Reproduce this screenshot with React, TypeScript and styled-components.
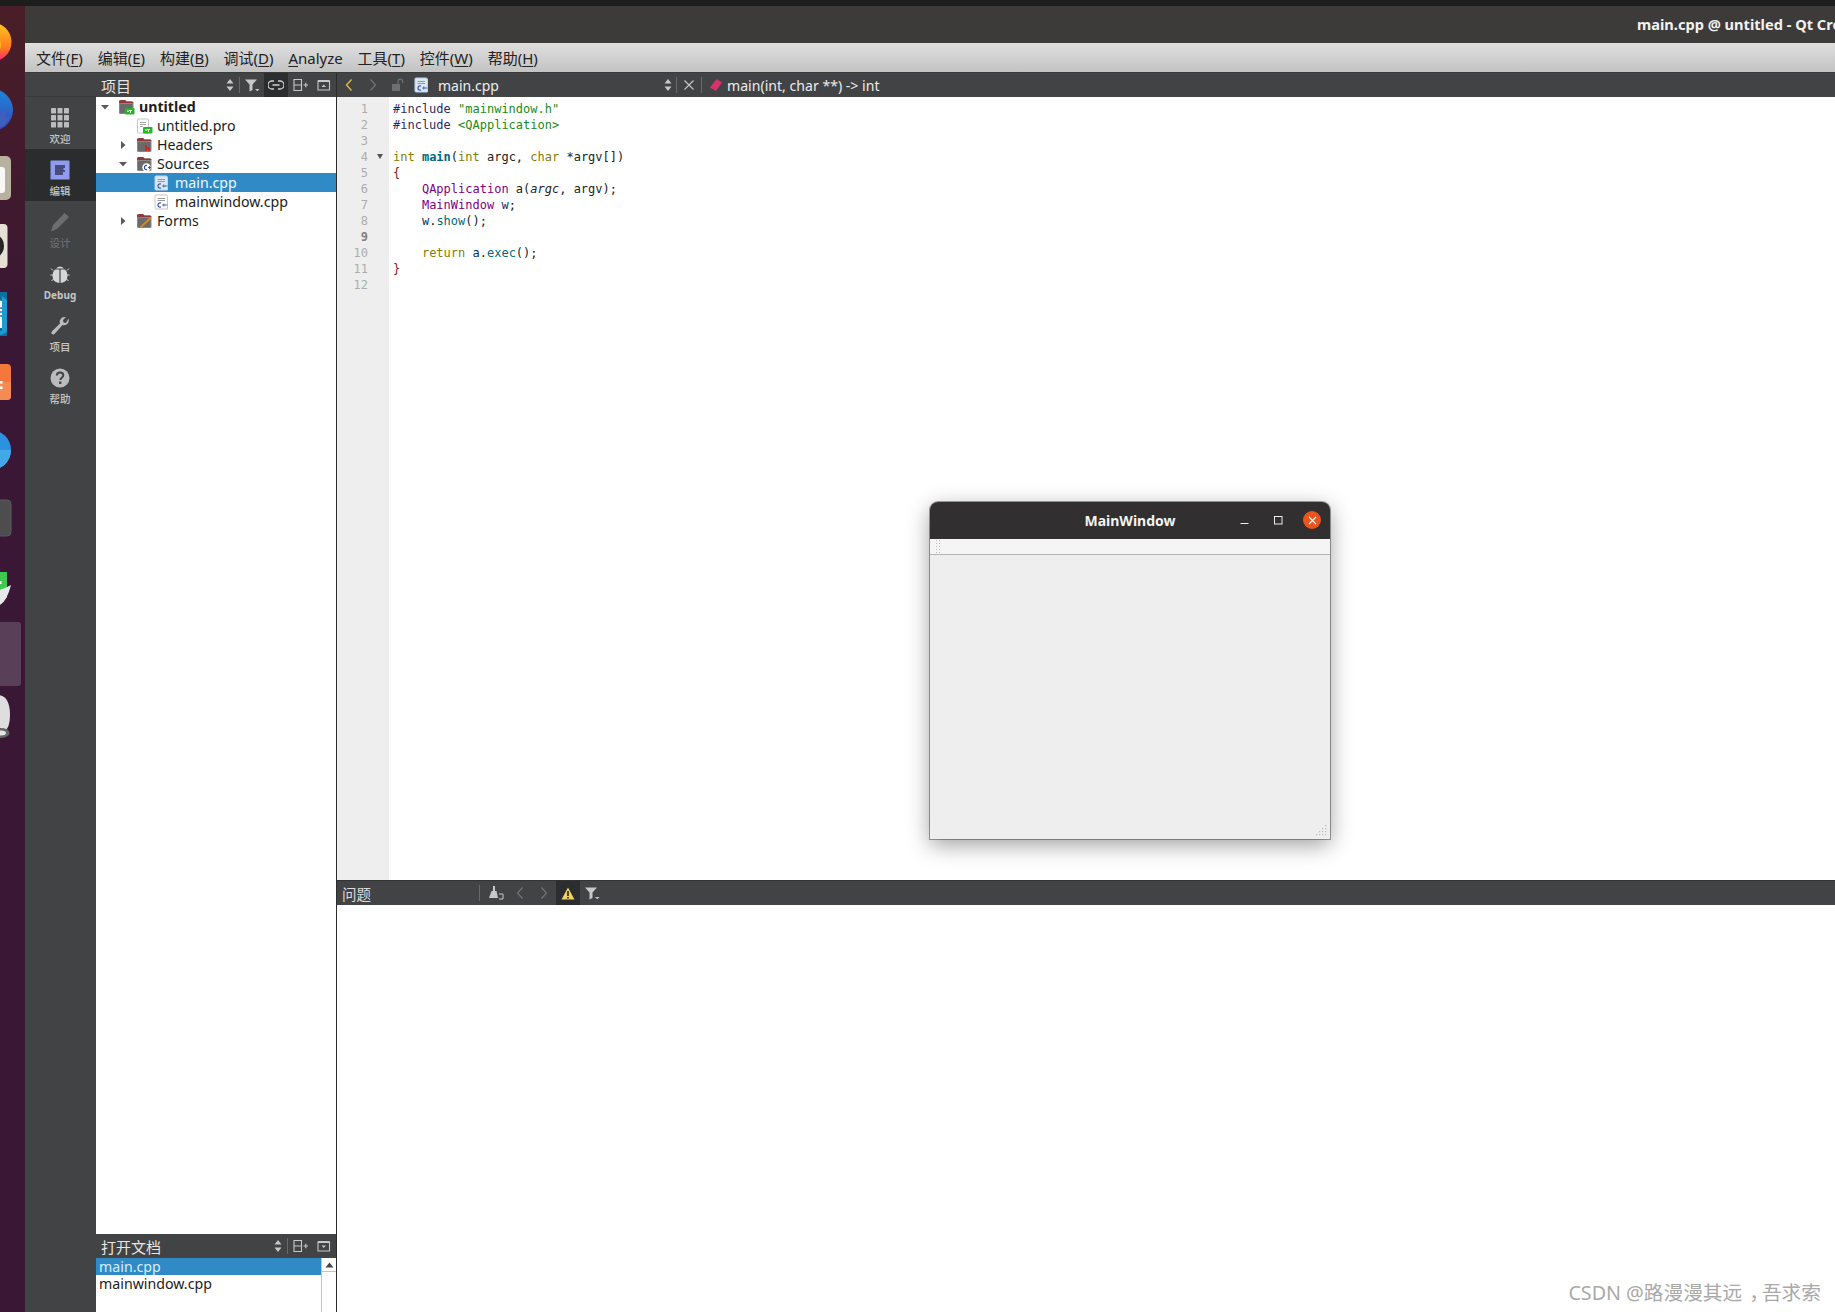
import React from 'react';
import styled, { createGlobalStyle } from 'styled-components';

const ui = `"Noto Sans", "Noto Sans CJK SC", sans-serif`;
const mono = `"DejaVu Sans Mono", monospace`;

const Global = createGlobalStyle`
  html, body { margin: 0; padding: 0; background: #fff; overflow: hidden; }
  body { font-family: ${ui}; }
  svg { flex: none; }
`;

/* ---- window chrome ---- */
const Screen = styled.div`
  position: relative;
  width: 1835px;
  height: 1312px;
  display: flex;
  overflow: hidden;
`;
const Dock = styled.div`
  width: 25px;
  flex: none;
  background: linear-gradient(#4a1e27, #3a1734 320px);
  display: flex;
  flex-direction: column;
  padding-top: 2px;
`;
const DockSlot = styled.div`
  height: 68px;
  flex: none;
  display: flex;
`;
const Desktop = styled.div`
  flex: 1;
  min-width: 0;
  display: flex;
  flex-direction: column;
`;
const TopStrip = styled.div`
  position: absolute;
  left: 0; right: 0; top: 0;
  height: 6px;
  background: #1d1d1d;
`;
const TitleBar = styled.div`
  height: 43px;
  flex: none;
  padding: 4px 0 0 1612px;
  box-sizing: border-box;
  background: #3d3b39;
  display: flex;
  align-items: center;
  overflow: hidden;
`;
const TitleText = styled.div`
  color: #f2f2f2;
  font-size: 14.6px;
  font-weight: 700;
  white-space: nowrap;
`;
const MenuBar = styled.div`
  height: 30px;
  flex: none;
  box-sizing: border-box;
  background: linear-gradient(#dfdfdf, #c3c3c3);
  border-bottom: 1px solid #3a3a3a;
  display: flex;
  align-items: center;
  padding-left: 11px;
  gap: 14.85px;
`;
const MenuItem = styled.span`
  font-size: 15px;
  line-height: 22px;
  margin-top: 1px;
  color: #222;
  white-space: nowrap;
  u { text-underline-offset: 2px; }
`;
const Work = styled.div`
  flex: 1;
  min-height: 0;
  display: flex;
`;

/* ---- mode bar ---- */
const ModeBar = styled.div`
  width: 71px;
  flex: none;
  background: #424345;
  display: flex;
  flex-direction: column;
`;
const ModeCap = styled.div`
  height: 24px;
  border-bottom: 1px solid #38393a;
  box-sizing: border-box;
`;
const ModeItem = styled.div<{ $active?: boolean; $dim?: boolean }>`
  height: 52px;
  flex: none;
  display: flex;
  flex-direction: column;
  align-items: center;
  justify-content: flex-start;
  padding: 11px 1px 0 0;
  box-sizing: border-box;
  background: ${(p) => (p.$active ? '#2b2c2e' : 'transparent')};
  color: ${(p) => (p.$dim ? '#6c6d6e' : '#c6c6c6')};
`;
const ModeLabel = styled.span<{ $latin?: boolean }>`
  font-size: ${(p) => (p.$latin ? '10px' : '10.5px')};
  font-weight: ${(p) => (p.$latin ? 700 : 500)};
  line-height: 13px;
  margin-top: 5px;
`;

/* ---- side panel ---- */
const Side = styled.div`
  width: 241px;
  flex: none;
  display: flex;
  flex-direction: column;
  border-right: 1px solid #2b2b2b;
  box-sizing: border-box;
`;
const PanelHead = styled.div`
  height: 24px;
  flex: none;
  background: #424345;
  display: flex;
  align-items: center;
  color: #e6e6e6;
  font-size: 15px;
  box-sizing: border-box;
`;
const HeadTitle = styled.span`
  padding-left: 5px;
  flex: 1;
  white-space: nowrap;
`;
const ToolBtn = styled.div<{ $on?: boolean; $narrow?: boolean }>`
  width: ${(p) => (p.$narrow ? 18 : 24)}px;
  height: 24px;
  flex: none;
  display: flex;
  align-items: center;
  justify-content: center;
  background: ${(p) => (p.$on ? '#2c2d2e' : 'transparent')};
`;
const Sep = styled.div<{ $after?: number }>`
  width: 1px;
  height: 16px;
  background: #68696b;
  flex: none;
  margin-right: ${(p) => p.$after ?? 0}px;
`;
const Tree = styled.div`
  flex: 1;
  background: #fff;
  min-height: 0;
`;
const Row = styled.div<{ $depth: number; $sel?: boolean }>`
  height: 19px;
  display: flex;
  align-items: center;
  padding-left: ${(p) => 2 + p.$depth * 18}px;
  background: ${(p) => (p.$sel ? '#2f8ac6' : 'transparent')};
  color: ${(p) => (p.$sel ? '#f2f7fb' : '#1c1c1c')};
  font-size: 14.2px;
  white-space: nowrap;
`;
const Arrow = styled.span`
  width: 14px;
  height: 14px;
  flex: none;
  display: flex;
  align-items: center;
  justify-content: center;
  margin-right: 6px;
`;
const RowIcon = styled.span`
  width: 16px;
  height: 16px;
  flex: none;
  display: flex;
  margin-right: 5px;
`;
const RowName = styled.span<{ $bold?: boolean }>`
  font-weight: ${(p) => (p.$bold ? 700 : 400)};
`;
const OpenDocs = styled.div`
  height: 54px;
  flex: none;
  display: flex;
  background: #fff;
  overflow: hidden;
`;
const DocList = styled.div`
  flex: 1;
  min-width: 0;
`;
const DocRow = styled.div<{ $sel?: boolean }>`
  height: 17px;
  line-height: 17px;
  padding-left: 3px;
  font-size: 14.2px;
  background: ${(p) => (p.$sel ? '#2f8ac6' : 'transparent')};
  color: ${(p) => (p.$sel ? '#d9ecf8' : '#1c1c1c')};
`;
const ScrollTrack = styled.div`
  width: 14px;
  flex: none;
  border-left: 1px solid #c4c4c4;
  display: flex;
  flex-direction: column;
`;
const ScrollUp = styled.div`
  height: 13px;
  border-bottom: 1px solid #c4c4c4;
  display: flex;
  align-items: center;
  justify-content: center;
`;

/* ---- editor ---- */
const Main = styled.div`
  flex: 1;
  min-width: 0;
  display: flex;
  flex-direction: column;
`;
const EditorBar = styled.div`
  height: 24px;
  flex: none;
  background: #424345;
  display: flex;
  align-items: center;
  color: #ececec;
  font-size: 14px;
`;
const FileCombo = styled.div`
  width: 267px;
  flex: none;
  display: flex;
  align-items: center;
  gap: 9px;
  padding: 0 3px 0 5px;
  box-sizing: border-box;
`;
const ComboName = styled.span`
  flex: 1;
`;
const SymbolMark = styled.svg`
  margin-left: 7px;
`;
const SymbolName = styled.span`
  margin-left: 4px;
  font-size: 14.1px;
  white-space: nowrap;
`;
const EditorBody = styled.div`
  height: 783px;
  flex: none;
  display: flex;
  background: #fff;
`;
const Gutter = styled.div`
  width: 52px;
  flex: none;
  background: #eeeeee;
  padding-top: 4px;
  box-sizing: border-box;
`;
const LineNo = styled.div<{ $cur?: boolean }>`
  height: 16px;
  line-height: 16px;
  width: 31px;
  text-align: right;
  font-family: ${mono};
  font-size: 12px;
  font-weight: ${(p) => (p.$cur ? 700 : 400)};
  color: ${(p) => (p.$cur ? '#808080' : '#adadad')};
  position: relative;
`;
const Fold = styled.span`
  position: absolute;
  left: 40px;
  top: 5px;
  width: 0;
  height: 0;
  border-left: 3.5px solid transparent;
  border-right: 3.5px solid transparent;
  border-top: 5px solid #555;
`;
const Code = styled.div`
  padding: 4px 0 0 4px;
  font-family: ${mono};
  font-size: 12px;
  color: #222;
`;
const CodeLine = styled.div`
  height: 16px;
  line-height: 16px;
  white-space: pre;
`;
const Tok = styled.span<{ $c: string; $b?: boolean; $i?: boolean }>`
  color: ${(p) => p.$c};
  font-weight: ${(p) => (p.$b ? 700 : 400)};
  font-style: ${(p) => (p.$i ? 'italic' : 'normal')};
`;
const ProblemsBar = styled.div`
  height: 25px;
  flex: none;
  background: #424345;
  border-top: 1px solid #333;
  box-sizing: border-box;
  display: flex;
  align-items: center;
  color: #dcdcdc;
  font-size: 14.5px;
`;
const ProblemsTitle = styled.span`
  width: 142px;
  padding-left: 5px;
  box-sizing: border-box;
  flex: none;
`;
const ProblemsBody = styled.div`
  flex: 1;
  background: #fff;
`;

/* ---- floating app window ---- */
const AppWindow = styled.div`
  position: absolute;
  left: 930px;
  top: 502px;
  width: 400px;
  height: 337px;
  border-radius: 8px 8px 0 0;
  box-shadow: 0 6px 22px rgba(0, 0, 0, 0.38), 0 0 0 1px rgba(0, 0, 0, 0.35);
  display: flex;
  flex-direction: column;
  background: #eeeeee;
`;
const WinHead = styled.div`
  height: 37px;
  flex: none;
  background: #312f2f;
  border-radius: 8px 8px 0 0;
  position: relative;
  display: flex;
  align-items: center;
  justify-content: center;
  color: #f3f3f3;
  font-size: 14px;
  font-weight: 700;
`;
const WinCtrls = styled.div`
  position: absolute;
  right: 9px;
  top: 9px;
  display: flex;
  align-items: center;
  gap: 16px;
`;
const WinBtn = styled.div<{ $close?: boolean }>`
  width: 18px;
  height: 18px;
  border-radius: 50%;
  background: ${(p) => (p.$close ? '#e95420' : 'transparent')};
  display: flex;
  align-items: center;
  justify-content: center;
`;
const WinTools = styled.div`
  height: 16px;
  flex: none;
  background: #f5f5f5;
  border-bottom: 1px solid #b4b4b4;
  padding-left: 5px;
  box-sizing: border-box;
`;
const Grip = styled.div`
  width: 5px;
  height: 15px;
  background-image: radial-gradient(circle, #bbb 0.8px, transparent 1px);
  background-size: 3px 3px;
`;
const WinBody = styled.div`
  flex: 1;
  position: relative;
`;
const SizeGrip = styled.svg`
  position: absolute;
  right: 2px;
  bottom: 2px;
`;
const Watermark = styled.div`
  position: absolute;
  right: 14px;
  bottom: 6px;
  color: #a9a9a9;
  font-size: 19.7px;
  white-space: nowrap;
`;
const WatermarkComma = styled.span`
  margin: 0 -7px 0 7px;
`;

/* ---- small drawings ---- */
const Chevron = ({ dir, color }: { dir: 'l' | 'r'; color: string }) => (
  <svg width="12" height="14" viewBox="0 0 12 14">
    <path d={dir === 'l' ? 'M8.500 1.500 3.500 7l5 5.500' : 'M3.500 1.500 8.500 7l-5 5.500'} fill="none" stroke={color} strokeWidth="1.400" />
  </svg>
);
const Updown = () => (
  <svg width="10" height="14" viewBox="0 0 10 14">
    <path d="M5 1 8.500 5.500h-7zM5 13 1.500 8.500h7z" fill="#c8c8c8" />
  </svg>
);
const FilterIco = ({ color = '#c8c8c8' }: { color?: string }) => (
  <svg width="16" height="14" viewBox="0 0 16 14">
    <path d="M1 1.500h12L8.500 6.500v5.500L5.500 13.500V6.500z" fill={color} />
    <path d="M11 11h4.500l-2.250 2.200z" fill={color} />
  </svg>
);
const SplitIco = () => (
  <svg width="16" height="14" viewBox="0 0 16 14">
    <path d="M2 1.500h7.500v11H2zM2 7h7.500" fill="none" stroke="#c8c8c8" strokeWidth="1.100" />
    <path d="M11.500 7h4.500M13.750 4.800v4.400" stroke="#c8c8c8" strokeWidth="1.100" />
  </svg>
);
const PanelIco = ({ down }: { down?: boolean }) => (
  <svg width="14" height="12" viewBox="0 0 14 12">
    <path d="M1 2h11.500v9H1z" fill="none" stroke="#c8c8c8" strokeWidth="1.100" />
    <path d="M1 1h11.500v2H1z" fill="#c8c8c8" />
    <path d={down ? 'M4.500 5.500h4.500L6.800 8z' : 'M4.500 8h4.500L6.800 5.500z'} fill="#c8c8c8" />
  </svg>
);
const TreeArrow = ({ open }: { open?: boolean }) => (
  <svg width="10" height="10" viewBox="0 0 10 10">
    <path d={open ? 'M1 3h8L5 7.500z' : 'M3 1l4.500 4L3 9z'} fill="#5a5a5a" />
  </svg>
);
const Folder = ({ badge }: { badge: 'qt' | 'h' | 'cpp' | 'form' }) => (
  <svg width="17" height="16" viewBox="0 0 17 16">
    <path d="M1 3Q1 1 3 1h4L8.500 2.500H14q1.500 0 1.500 1.500v9.500q0 1.500-1.500 1.500H2.500Q1 15 1 13.500z" fill="#8b8684" />
    <path d="M1 3Q1 1 3 1h4L8.500 2.500H14q1.500 0 1.500 1.500H1z" fill="#8c3a3a" />
    <rect x="2" y="5" width="12.500" height="9" rx="1" fill="#6b6a6a" />
    {badge === 'qt' && (
      <>
        <rect x="7" y="9" width="9.500" height="6.500" rx="1" fill="#26b526" />
        <path d="M9 12h2M12.500 11v3M14 11.500h-3" stroke="#fff" strokeWidth="1" fill="none" />
      </>
    )}
    {badge === 'h' && <path d="M10 8v6M10 11.500q3-1.500 3 .5v2" fill="none" stroke="#e01a1a" strokeWidth="1.500" />}
    {badge === 'cpp' && (
      <>
        <circle cx="10.500" cy="11.500" r="4.200" fill="#fff" />
        <path d="M11 9.500q-2.500-.5-2.500 2t2.500 2" fill="none" stroke="#2d4fa8" strokeWidth="1.200" />
        <path d="M12 11.500h3M13.500 10v3" stroke="#2d4fa8" strokeWidth="0.900" />
      </>
    )}
    {badge === 'form' && <path d="M4.500 14.500 14.500 5" stroke="#d9842b" strokeWidth="1.800" />}
  </svg>
);
const FileQt = () => (
  <svg width="17" height="16" viewBox="0 0 17 16">
    <path d="M2.500 1h9q1 0 1 1v13h-10q-1 0-1-1V2q0-1 1-1z" fill="#fff" stroke="#c6c6c6" />
    <path d="M4 4.500h6M4 6.500h6M4 8.500h3" stroke="#9c9c9c" strokeWidth="0.900" />
    <rect x="7" y="9" width="9.500" height="6.500" rx="1" fill="#26b526" />
    <path d="M9 12h2M12.500 11v3M14 11.500h-3" stroke="#fff" strokeWidth="1" fill="none" />
  </svg>
);
const FileCpp = ({ sel }: { sel?: boolean }) => (
  <svg width="15" height="16" viewBox="0 0 15 16">
    <path d="M2 1h10q1.500 0 1.500 1.500V15H2q-1 0-1-1V2q0-1 1-1z" fill={sel ? '#dbe7f2' : '#fff'} stroke={sel ? '#bcd4e8' : '#c6c6c6'} />
    <path d="M3.500 4.500h7.500M3.500 6.500h7.500" stroke="#8f8f8f" strokeWidth="0.900" />
    <path d="M7 9q-3-.7-3 2t3 2" fill="none" stroke="#2d4fc0" strokeWidth="1.200" />
    <path d="M8 11h3.500M9.800 9.500v3M11 11h2.500" stroke="#2d4fc0" strokeWidth="0.800" />
  </svg>
);

/* mode bar icons */
const GridIco = () => (
  <svg width="20" height="20" viewBox="0 0 20 20">
    {[0, 7, 14].flatMap((y) => [1, 7.500, 14].map((x) => <rect key={`${x}-${y}`} x={x} y={y} width="5" height="5.500" rx="0.500" fill="#bcbcbc" />))}
  </svg>
);
const EditIco = () => (
  <svg width="20" height="20" viewBox="0 0 20 20">
    <rect x="0.500" y="0.500" width="19" height="19" fill="#8f9cf0" rx="0.500" />
    <path d="M5 5h10v3h-1.500v2H15v2h-2v3H5z" fill="#464d7c" />
  </svg>
);
const PencilIco = () => (
  <svg width="20" height="20" viewBox="0 0 20 20">
    <path d="M14.500 1 19 5 7 17l-6 2.500L3 13z" fill="#6c6d6e" />
  </svg>
);
const BugIco = () => (
  <svg width="20" height="20" viewBox="0 0 20 20">
    <path d="M6 4.500Q10 .5 14 4.500z" fill="#d6d6d6" />
    <path d="M9.400 5.500v13.500Q2.500 18.500 2.500 11.500q0-4 2.500-6zM10.600 5.500v13.500q6.900-.5 6.900-7.500 0-4-2.500-6z" fill="#d6d6d6" />
    <path d="M3 6.500 1 4.500M17 6.500l2-2M3 11H.5M17 11h2.500M3.500 15l-2 2M16.500 15l2 2" stroke="#d6d6d6" strokeWidth="1" />
  </svg>
);
const WrenchIco = () => (
  <svg width="20" height="20" viewBox="0 0 20 20">
    <path d="M18.500 2.500q1 4-2 6-2 1.200-4 .5L4.500 18q-1.500 1.200-2.800-.2-1-1.300.3-2.600L10 7.500q-1-3 1.200-5.200 2-1.800 4.800-1.300L13 4l.5 2.500L16 7z" fill="#bcbcbc" />
  </svg>
);
const HelpIco = () => (
  <svg width="20" height="20" viewBox="0 0 20 20">
    <circle cx="10" cy="10" r="9.500" fill="#bcbcbc" />
    <path d="M6.800 7.500Q7 4.500 10 4.500q3.300 0 3.300 2.800 0 1.700-1.700 2.600-1.200.7-1.200 2" fill="none" stroke="#424345" strokeWidth="2" />
    <rect x="9" y="13.500" width="2.400" height="2.400" fill="#424345" />
  </svg>
);

/* dock icons, all cut off by the left screen edge */
const DockIcon = ({ kind }: { kind: number }) => {
  const art: React.ReactNode[] = [
    <>
      <defs>
        <linearGradient id="ff" x1="0" y1="0" x2="0" y2="1">
          <stop offset="0" stopColor="#ffc81f" />
          <stop offset="0.65" stopColor="#ff7a1f" />
          <stop offset="1" stopColor="#ff1f7a" />
        </linearGradient>
      </defs>
      <circle cx="-8" cy="40" r="19.500" fill="url(#ff)" />
      <path d="M-20 38Q-6 30 1 40q1 10-8 15h-13z" fill="#ffb01f" />
      <path d="M-20 44q10-6 14 0 2 6-4 8h-10z" fill="#ffe27a" />
    </>,
    <>
      <defs>
        <linearGradient id="tb" x1="0" y1="0" x2="0" y2="1">
          <stop offset="0" stopColor="#1c87dc" />
          <stop offset="1" stopColor="#3a44b4" />
        </linearGradient>
      </defs>
      <circle cx="-8" cy="40" r="21" fill="url(#tb)" />
      <path d="M-20 48 -14 36-11 42-7 32-5 40-1 34 0 44 6 38 5 48 11 46 4 56-8 60-20 60z" fill="#3f5fc0" />
    </>,
    <>
      <rect x="-20" y="18" width="31" height="44" rx="5" fill="#b8b1a0" />
      <rect x="-20" y="29" width="25" height="26" rx="3" fill="#faf8f4" />
    </>,
    <>
      <rect x="-20" y="18" width="27.500" height="44" rx="4" fill="#e6e1d4" />
      <circle cx="-9" cy="40" r="13" fill="#262626" />
      <circle cx="-9" cy="40" r="8" fill="#777" />
    </>,
    <>
      <path d="M-20 18H7v44h-27z" fill="#0d6f9c" />
      <path d="M-20 22 2 27v27h-22z" fill="#fff" />
      <path d="M2 22 7 26v31q-2 3-7 4h-20v-4H2z" fill="#1f9bd2" />
      <path d="M-2 34h4M-2 38h4M-2 42h4" stroke="#1f7fb0" strokeWidth="1.500" />
    </>,
    <>
      <rect x="-20" y="22" width="31" height="36" rx="4" fill="#f4783c" />
      <path d="M-20 40h31v14q0 4-4 4h-27z" fill="#f58b53" />
      <path d="M-1 39h3.500v2.500H-1zM-1 44.500h3.500V47H-1z" fill="#fff" />
    </>,
    <>
      <circle cx="-9" cy="40" r="20" fill="#2a92e0" />
      <path d="M-29 40h40a20 20 0 0 1-40 0z" fill="#44a8e8" />
    </>,
    <rect x="-20" y="22" width="31" height="36" rx="4" fill="#4d4d4d" stroke="#5c5c5c" />,
    <>
      <rect x="-20" y="26" width="27" height="26" fill="#3ec94f" />
      <rect x="0" y="35" width="1.500" height="3" fill="#fff" />
      <path d="M-20 45Q-5 48 11 39 7 55 0 59-10 62-20 60z" fill="#e8e8e8" />
    </>,
    <rect x="-10" y="8" width="31" height="64" rx="3" fill="#593f57" />,
    <>
      <path d="M-20 50Q-20 13-2 13 10 14 10 33 10 46 4 50z" fill="#dedede" />
      <ellipse cx="1" cy="51" rx="8.500" ry="5" fill="#666" />
      <ellipse cx="1" cy="51" rx="5" ry="2.500" fill="#e4e4e4" />
    </>,
  ];
  return (
    <svg width="25" height="68" viewBox="0 0 25 68" overflow="visible">
      {art[kind]}
    </svg>
  );
};

const lines: React.ReactNode[] = [
  <>
    <Tok $c="#2b2b5e">#include </Tok>
    <Tok $c="#1a8a1a">"mainwindow.h"</Tok>
  </>,
  <>
    <Tok $c="#2b2b5e">#include </Tok>
    <Tok $c="#1a8a1a">{'<QApplication>'}</Tok>
  </>,
  '',
  <>
    <Tok $c="#808000">int </Tok>
    <Tok $c="#00677c" $b>main</Tok>
    (<Tok $c="#808000">int </Tok>argc, <Tok $c="#808000">char </Tok>*argv[])
  </>,
  <Tok $c="#7a1a1a">{'{'}</Tok>,
  <>
    {'    '}
    <Tok $c="#800080">QApplication </Tok>a(<Tok $c="#222" $i>argc</Tok>, argv);
  </>,
  <>
    {'    '}
    <Tok $c="#800080">MainWindow </Tok>
    <Tok $c="#092e64">w</Tok>;
  </>,
  <>
    {'    '}
    <Tok $c="#092e64">w</Tok>.<Tok $c="#00677c">show</Tok>();
  </>,
  '',
  <>
    {'    '}
    <Tok $c="#808000">return </Tok>
    <Tok $c="#092e64">a</Tok>.<Tok $c="#00677c">exec</Tok>();
  </>,
  <Tok $c="#7a1a1a">{'}'}</Tok>,
  '',
];

const MenuEntry = ({ label, k }: { label: string; k: string }) => (
  <MenuItem>
    {label}(<u>{k}</u>)
  </MenuItem>
);

export default function App() {
  return (
    <Screen>
      <Global />
      <TopStrip />
      <Dock>
        {Array.from({ length: 11 }, (_, i) => (
          <DockSlot key={i}>
            <DockIcon kind={i} />
          </DockSlot>
        ))}
      </Dock>
      <Desktop>
        <TitleBar>
          <TitleText>main.cpp @ untitled - Qt Creator</TitleText>
        </TitleBar>
        <MenuBar>
          <MenuEntry label="文件" k="F" />
          <MenuEntry label="编辑" k="E" />
          <MenuEntry label="构建" k="B" />
          <MenuEntry label="调试" k="D" />
          <MenuItem>
            <u>A</u>nalyze
          </MenuItem>
          <MenuEntry label="工具" k="T" />
          <MenuEntry label="控件" k="W" />
          <MenuEntry label="帮助" k="H" />
        </MenuBar>
        <Work>
          <ModeBar>
            <ModeCap />
            <ModeItem>
              <GridIco />
              <ModeLabel>欢迎</ModeLabel>
            </ModeItem>
            <ModeItem $active>
              <EditIco />
              <ModeLabel>编辑</ModeLabel>
            </ModeItem>
            <ModeItem $dim>
              <PencilIco />
              <ModeLabel>设计</ModeLabel>
            </ModeItem>
            <ModeItem>
              <BugIco />
              <ModeLabel $latin>Debug</ModeLabel>
            </ModeItem>
            <ModeItem>
              <WrenchIco />
              <ModeLabel>项目</ModeLabel>
            </ModeItem>
            <ModeItem>
              <HelpIco />
              <ModeLabel>帮助</ModeLabel>
            </ModeItem>
          </ModeBar>
          <Side>
            <PanelHead>
              <HeadTitle>项目</HeadTitle>
              <ToolBtn $narrow>
                <Updown />
              </ToolBtn>
              <Sep />
              <ToolBtn>
                <FilterIco />
              </ToolBtn>
              <ToolBtn $on>
                <svg width="16" height="10" viewBox="0 0 16 10">
                  <path d="M6 1H4a4 4 0 0 0 0 8h2M10 1h2a4 4 0 0 1 0 8h-2M4.500 5h7" fill="none" stroke="#d0d0d0" strokeWidth="1.300" />
                </svg>
              </ToolBtn>
              <ToolBtn>
                <SplitIco />
              </ToolBtn>
              <ToolBtn>
                <PanelIco />
              </ToolBtn>
            </PanelHead>
            <Tree>
              <Row $depth={0}>
                <Arrow><TreeArrow open /></Arrow>
                <RowIcon><Folder badge="qt" /></RowIcon>
                <RowName $bold>untitled</RowName>
              </Row>
              <Row $depth={1}>
                <Arrow />
                <RowIcon><FileQt /></RowIcon>
                <RowName>untitled.pro</RowName>
              </Row>
              <Row $depth={1}>
                <Arrow><TreeArrow /></Arrow>
                <RowIcon><Folder badge="h" /></RowIcon>
                <RowName>Headers</RowName>
              </Row>
              <Row $depth={1}>
                <Arrow><TreeArrow open /></Arrow>
                <RowIcon><Folder badge="cpp" /></RowIcon>
                <RowName>Sources</RowName>
              </Row>
              <Row $depth={2} $sel>
                <Arrow />
                <RowIcon><FileCpp sel /></RowIcon>
                <RowName>main.cpp</RowName>
              </Row>
              <Row $depth={2}>
                <Arrow />
                <RowIcon><FileCpp /></RowIcon>
                <RowName>mainwindow.cpp</RowName>
              </Row>
              <Row $depth={1}>
                <Arrow><TreeArrow /></Arrow>
                <RowIcon><Folder badge="form" /></RowIcon>
                <RowName>Forms</RowName>
              </Row>
            </Tree>
            <PanelHead>
              <HeadTitle>打开文档</HeadTitle>
              <ToolBtn $narrow>
                <Updown />
              </ToolBtn>
              <Sep />
              <ToolBtn>
                <SplitIco />
              </ToolBtn>
              <ToolBtn>
                <PanelIco down />
              </ToolBtn>
            </PanelHead>
            <OpenDocs>
              <DocList>
                <DocRow $sel>main.cpp</DocRow>
                <DocRow>mainwindow.cpp</DocRow>
              </DocList>
              <ScrollTrack>
                <ScrollUp>
                  <svg width="9" height="6" viewBox="0 0 9 6">
                    <path d="M4.500 0.500 8.500 5.500h-8z" fill="#444" />
                  </svg>
                </ScrollUp>
              </ScrollTrack>
            </OpenDocs>
          </Side>
          <Main>
            <EditorBar>
              <ToolBtn>
                <Chevron dir="l" color="#e0b93c" />
              </ToolBtn>
              <ToolBtn>
                <Chevron dir="r" color="#6e6f71" />
              </ToolBtn>
              <ToolBtn>
                <svg width="14" height="14" viewBox="0 0 14 14">
                  <rect x="2" y="6" width="8" height="7" fill="#6e6f71" />
                  <path d="M8 6V3.500a2.300 2.300 0 0 1 4.600 0V5" fill="none" stroke="#6e6f71" strokeWidth="1.200" />
                </svg>
              </ToolBtn>
              <FileCombo>
                <FileCpp sel />
                <ComboName>main.cpp</ComboName>
                <Updown />
              </FileCombo>
              <Sep />
              <ToolBtn>
                <svg width="12" height="12" viewBox="0 0 12 12">
                  <path d="M1.500 1.500l9 9M10.500 1.500l-9 9" stroke="#c8c8c8" strokeWidth="1.100" />
                </svg>
              </ToolBtn>
              <Sep />
              <SymbolMark width="14" height="14" viewBox="0 0 14 14">
                <path d="M7.500 1 13 4.500 7 13 1 9.500z" fill="#d6336c" />
              </SymbolMark>
              <SymbolName>main(int, char **) -&gt; int</SymbolName>
            </EditorBar>
            <EditorBody>
              <Gutter>
                {lines.map((_, i) => (
                  <LineNo key={i} $cur={i === 8}>
                    {i + 1}
                    {i === 3 && <Fold />}
                  </LineNo>
                ))}
              </Gutter>
              <Code>
                {lines.map((l, i) => (
                  <CodeLine key={i}>{l}</CodeLine>
                ))}
              </Code>
            </EditorBody>
            <ProblemsBar>
              <ProblemsTitle>问题</ProblemsTitle>
              <Sep $after={4} />
              <ToolBtn>
                <svg width="16" height="14" viewBox="0 0 16 14">
                  <path d="M5 0h2v5H5zM3.500 5h5L10 12H1z" fill="#c8c8c8" />
                  <path d="M11 8h4v5h-4" fill="none" stroke="#c8c8c8" />
                </svg>
              </ToolBtn>
              <ToolBtn>
                <Chevron dir="l" color="#6e6f71" />
              </ToolBtn>
              <ToolBtn>
                <Chevron dir="r" color="#6e6f71" />
              </ToolBtn>
              <ToolBtn $on>
                <svg width="14" height="13" viewBox="0 0 14 13">
                  <path d="M7 0.500 13.500 12.500H.5z" fill="#f0d264" />
                  <path d="M6.200 4h1.600v5H6.200zM6.200 10h1.600v1.500H6.200z" fill="#222" />
                </svg>
              </ToolBtn>
              <ToolBtn>
                <FilterIco />
              </ToolBtn>
            </ProblemsBar>
            <ProblemsBody />
          </Main>
        </Work>
      </Desktop>

      <AppWindow>
        <WinHead>
          MainWindow
          <WinCtrls>
            <WinBtn>
              <svg width="9" height="9" viewBox="0 0 9 9">
                <path d="M0.500 7.500h8" stroke="#eee" strokeWidth="1" />
              </svg>
            </WinBtn>
            <WinBtn>
              <svg width="9" height="9" viewBox="0 0 9 9">
                <rect x="0.500" y="0.500" width="7.500" height="7.500" fill="none" stroke="#eee" />
              </svg>
            </WinBtn>
            <WinBtn $close>
              <svg width="9" height="9" viewBox="0 0 9 9">
                <path d="M1 1l7 7M8 1l-7 7" stroke="#fff" strokeWidth="1.100" />
              </svg>
            </WinBtn>
          </WinCtrls>
        </WinHead>
        <WinTools>
          <Grip />
        </WinTools>
        <WinBody>
          <SizeGrip width="12" height="12" viewBox="0 0 12 12">
            {[[9, 0], [6, 3], [9, 3], [3, 6], [6, 6], [9, 6], [0, 9], [3, 9], [6, 9], [9, 9]].map(([x, y]) => (
              <rect key={`${x}-${y}`} x={x} y={y} width="1.200" height="1.200" fill="#bbb" />
            ))}
          </SizeGrip>
        </WinBody>
      </AppWindow>

      <Watermark>
        CSDN @路漫漫其远<WatermarkComma>，</WatermarkComma>吾求索
      </Watermark>
    </Screen>
  );
}
